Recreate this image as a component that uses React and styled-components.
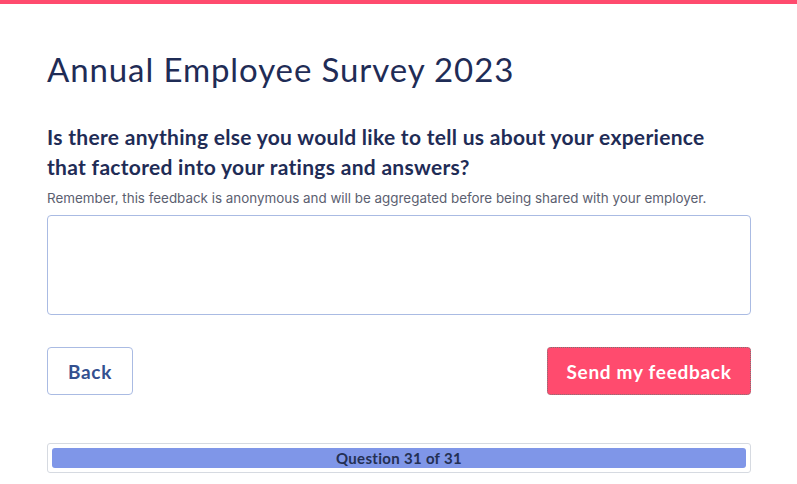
import styled, { createGlobalStyle } from 'styled-components'

const GlobalStyle = createGlobalStyle`
  html, body {
    margin: 0;
    padding: 0;
    background: #fff;
  }
  * {
    box-sizing: border-box;
  }
`

const TopBar = styled.div`
  height: 4px;
  background: #ff4b6e;
`

const Page = styled.div`
  padding: 43px 46px 0 47px;
  font-family: 'Inter', sans-serif;
`

const Title = styled.h1`
  margin: 0 0 31px;
  font-family: 'Lato', sans-serif;
  font-weight: 400;
  font-size: 33px;
  letter-spacing: 0.9px;
  line-height: 44px;
  color: #1f2c56;
`

const Question = styled.h2`
  margin: 0;
  max-width: 690px;
  font-family: 'Lato', sans-serif;
  font-weight: 700;
  font-size: 21px;
  letter-spacing: 0.3px;
  line-height: 30px;
  color: #1f2c56;
`

const Hint = styled.p`
  margin: 7px 0 8px;
  font-size: 13.4px;
  line-height: 18px;
  color: #5b6070;
`

const Answer = styled.textarea`
  display: block;
  width: 100%;
  height: 100px;
  resize: none;
  border: 1px solid #aabbe3;
  border-radius: 4px;
  outline: none;
`

const Actions = styled.div`
  display: flex;
  justify-content: space-between;
  margin-top: 32px;
`

const Button = styled.button`
  height: 48px;
  width: ${(p) => (p.$primary ? '204px' : '86px')};
  padding: 0;
  border-radius: 4px;
  font-family: 'Lato', sans-serif;
  font-weight: 700;
  font-size: 19px;
  letter-spacing: 0.7px;
  cursor: pointer;
  color: ${(p) => (p.$primary ? '#fff' : '#33508f')};
  background: ${(p) => (p.$primary ? '#ff4b6e' : '#fff')};
  border: 1px ${(p) => (p.$primary ? 'dotted #777' : 'solid #aabbe3')};
`

const Progress = styled.div`
  margin-top: 48px;
  height: 30px;
  padding: 4px;
  border: 1px solid #d6dae1;
  border-radius: 3px;
`

const Fill = styled.div`
  height: 100%;
  border-radius: 3px;
  background: #7f96e8;
  display: flex;
  align-items: center;
  justify-content: center;
  font-family: 'Lato', sans-serif;
  font-weight: 700;
  font-size: 15px;
  letter-spacing: 0.3px;
  color: #243053;
`

export default function App() {
  const current = 31
  const total = 31
  return (
    <>
      <GlobalStyle />
      <TopBar />
      <Page>
        <Title>Annual Employee Survey 2023</Title>
        <Question>
          Is there anything else you would like to tell us about your experience
          that factored into your ratings and answers?
        </Question>
        <Hint>
          Remember, this feedback is anonymous and will be aggregated before being
          shared with your employer.
        </Hint>
        <Answer />
        <Actions>
          <Button>Back</Button>
          <Button $primary>Send my feedback</Button>
        </Actions>
        <Progress>
          <Fill style={{ width: `${(current / total) * 100}%` }}>
            Question {current} of {total}
          </Fill>
        </Progress>
      </Page>
    </>
  )
}
